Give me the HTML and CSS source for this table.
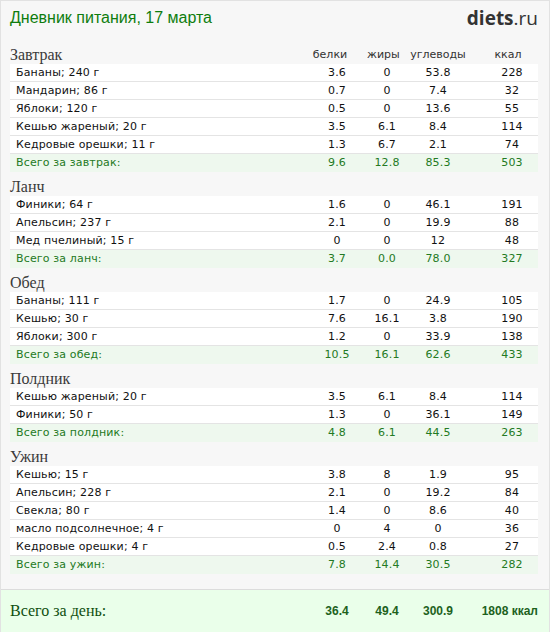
FILE: index.html
```html
<!DOCTYPE html>
<html lang="ru">
<head>
<meta charset="utf-8">
<title>Дневник питания</title>
<link rel="stylesheet" href="styles.css">
</head>
<body>
<div class="page">
  <div class="header">
    <div class="title">Дневник питания, 17 марта</div>
    <div class="logo"><b>diets</b>.ru</div>
  </div>

  <div class="section">
    <div class="grid head">
      <div class="meal">Завтрак</div>
      <div class="ch ch-b">белки</div>
      <div class="ch ch-f">жиры</div>
      <div class="ch ch-c">углеводы</div>
      <div class="ch ch-k">ккал</div>
    </div>
    <div class="grid row"><div class="name">Бананы; 240 г</div><div>3.6</div><div>0</div><div>53.8</div><div class="k">228</div></div>
    <div class="grid row"><div class="name">Мандарин; 86 г</div><div>0.7</div><div>0</div><div>7.4</div><div class="k">32</div></div>
    <div class="grid row"><div class="name">Яблоки; 120 г</div><div>0.5</div><div>0</div><div>13.6</div><div class="k">55</div></div>
    <div class="grid row"><div class="name">Кешью жареный; 20 г</div><div>3.5</div><div>6.1</div><div>8.4</div><div class="k">114</div></div>
    <div class="grid row"><div class="name">Кедровые орешки; 11 г</div><div>1.3</div><div>6.7</div><div>2.1</div><div class="k">74</div></div>
    <div class="grid row total"><div class="name">Всего за завтрак:</div><div>9.6</div><div>12.8</div><div>85.3</div><div class="k">503</div></div>
  </div>

  <div class="section">
    <div class="grid head"><div class="meal">Ланч</div></div>
    <div class="grid row"><div class="name">Финики; 64 г</div><div>1.6</div><div>0</div><div>46.1</div><div class="k">191</div></div>
    <div class="grid row"><div class="name">Апельсин; 237 г</div><div>2.1</div><div>0</div><div>19.9</div><div class="k">88</div></div>
    <div class="grid row"><div class="name">Мед пчелиный; 15 г</div><div>0</div><div>0</div><div>12</div><div class="k">48</div></div>
    <div class="grid row total"><div class="name">Всего за ланч:</div><div>3.7</div><div>0.0</div><div>78.0</div><div class="k">327</div></div>
  </div>

  <div class="section">
    <div class="grid head"><div class="meal">Обед</div></div>
    <div class="grid row"><div class="name">Бананы; 111 г</div><div>1.7</div><div>0</div><div>24.9</div><div class="k">105</div></div>
    <div class="grid row"><div class="name">Кешью; 30 г</div><div>7.6</div><div>16.1</div><div>3.8</div><div class="k">190</div></div>
    <div class="grid row"><div class="name">Яблоки; 300 г</div><div>1.2</div><div>0</div><div>33.9</div><div class="k">138</div></div>
    <div class="grid row total"><div class="name">Всего за обед:</div><div>10.5</div><div>16.1</div><div>62.6</div><div class="k">433</div></div>
  </div>

  <div class="section">
    <div class="grid head"><div class="meal">Полдник</div></div>
    <div class="grid row"><div class="name">Кешью жареный; 20 г</div><div>3.5</div><div>6.1</div><div>8.4</div><div class="k">114</div></div>
    <div class="grid row"><div class="name">Финики; 50 г</div><div>1.3</div><div>0</div><div>36.1</div><div class="k">149</div></div>
    <div class="grid row total"><div class="name">Всего за полдник:</div><div>4.8</div><div>6.1</div><div>44.5</div><div class="k">263</div></div>
  </div>

  <div class="section">
    <div class="grid head"><div class="meal">Ужин</div></div>
    <div class="grid row"><div class="name">Кешью; 15 г</div><div>3.8</div><div>8</div><div>1.9</div><div class="k">95</div></div>
    <div class="grid row"><div class="name">Апельсин; 228 г</div><div>2.1</div><div>0</div><div>19.2</div><div class="k">84</div></div>
    <div class="grid row"><div class="name">Свекла; 80 г</div><div>1.4</div><div>0</div><div>8.6</div><div class="k">40</div></div>
    <div class="grid row"><div class="name">масло подсолнечное; 4 г</div><div>0</div><div>4</div><div>0</div><div class="k">36</div></div>
    <div class="grid row"><div class="name">Кедровые орешки; 4 г</div><div>0.5</div><div>2.4</div><div>0.8</div><div class="k">27</div></div>
    <div class="grid row total"><div class="name">Всего за ужин:</div><div>7.8</div><div>14.4</div><div>30.5</div><div class="k">282</div></div>
  </div>

  <div class="day-total">
    <div class="grid day-grid">
      <div class="day-label">Всего за день:</div>
      <div>36.4</div>
      <div>49.4</div>
      <div>300.9</div>
      <div class="day-k">1808 ккал</div>
    </div>
  </div>
</div>
</body>
</html>
```

FILE: styles.css
```css
html, body {
  margin: 0;
  padding: 0;
  background: #f7f7f7;
}

.page {
  width: 550px;
  min-height: 632px;
  box-sizing: border-box;
  border: 1px solid #e2e2e2;
  border-bottom: none;
  background: #f7f7f7;
  display: flex;
  flex-direction: column;
}

.header {
  height: 39px;
  display: flex;
  justify-content: space-between;
  align-items: center;
  padding: 0 11px 0 9px;
  box-sizing: border-box;
}

.title {
  font-family: "Liberation Sans", Arial, sans-serif;
  font-size: 16px;
  color: #0e7d0e;
  margin-top: -6px;
}

.logo {
  font-family: "Open Sans", sans-serif;
  font-size: 19px;
  color: #333;
  margin-top: -6px;
}

.logo b {
  font-weight: 700;
}

.section {
  padding: 6px 11px 0 9px;
}

.grid {
  display: grid;
  grid-template-columns: 1fr 60px 40px 62px 69px;
  text-align: center;
}

.grid > .k {
  padding-left: 17px;
}

.head {
  height: 18px;
  line-height: 18px;
  align-items: end;
}

.meal {
  text-align: left;
  font-family: "Liberation Serif", serif;
  font-size: 16px;
  color: #3a3a3a;
}

.ch {
  font-family: "DejaVu Sans", Verdana, sans-serif;
  font-size: 11px;
  color: #333;
}

.ch-b { padding-right: 14px; }
.ch-f { padding-right: 14px; }
.ch-k { padding-left: 9px; }

.row {
  height: 18px;
  line-height: 17px;
  box-sizing: border-box;
  background: #fff;
  border-bottom: 1px solid #e4e4e4;
  font-family: "DejaVu Sans", Verdana, sans-serif;
  font-size: 11px;
  letter-spacing: 0.15px;
  color: #111;
}

.row .name {
  text-align: left;
  padding-left: 6px;
}

.row.total {
  background: #eef8ee;
  border-bottom: none;
  color: #237a23;
  line-height: 18px;
}

.day-total {
  margin-top: 15px;
  flex: 1;
  border-top: 1px solid #dcdcdc;
  background: #eaffea;
  padding: 0 11px 0 9px;
}

.day-grid {
  height: 42px;
  align-items: center;
  font-family: "Liberation Sans", Arial, sans-serif;
  font-weight: 700;
  font-size: 12px;
  color: #1d621d;
}

.day-label {
  text-align: left;
  font-family: "Liberation Serif", serif;
  font-weight: 400;
  font-size: 16px;
  color: #0f4f0f;
}

.grid > .day-k {
  text-align: right;
  padding-left: 0;
}
```
